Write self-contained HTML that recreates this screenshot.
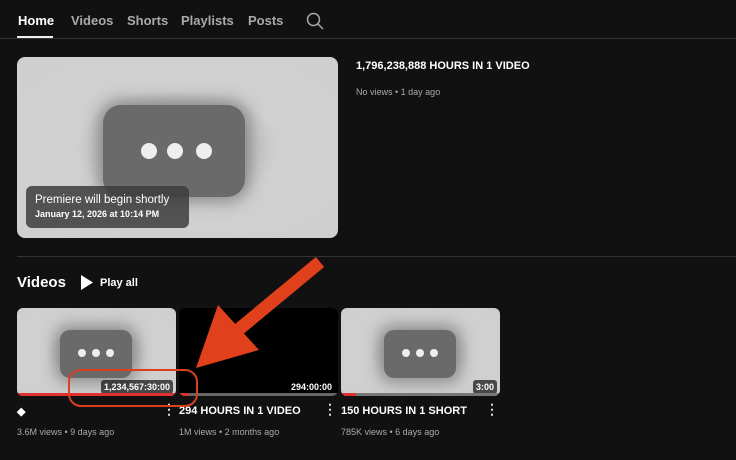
<!DOCTYPE html><html><head><style>
body{margin:0;width:736px;height:460px;background:#111;font-family:"Liberation Sans",sans-serif;color:#fff;position:relative;overflow:hidden}
.a{position:absolute}
.tab{position:absolute;top:13px;font-size:13px;font-weight:bold;color:#aaa}
.th{position:absolute;border-radius:8px;overflow:hidden;background:radial-gradient(ellipse at center,#9a9a9a 0%,#d0d0d0 45%,#cfcfcf 100%)}
.pill{position:absolute;background:#6a6a6a;border-radius:14px;box-shadow:0 0 14px 6px rgba(90,90,90,.5)}
.dot{position:absolute;background:#eee;border-radius:50%}
.dur{position:absolute;background:rgba(0,0,0,.65);color:#fff;font-size:9px;font-weight:bold;padding:2px 3px;border-radius:3px}
.t{position:absolute;font-size:11px;font-weight:bold}
.m{position:absolute;font-size:9px;color:#aaa}
.k{position:absolute;font-size:14px;font-weight:bold;color:#ddd}
</style></head><body>
<div class="tab" style="left:18px;color:#fff">Home</div>
<div class="a" style="left:17px;top:36px;width:36px;height:2px;background:#eee"></div>
<div class="tab" style="left:71px">Videos</div>
<div class="tab" style="left:127px">Shorts</div>
<div class="tab" style="left:181px">Playlists</div>
<div class="tab" style="left:248px">Posts</div>
<svg class="a" style="left:306px;top:12px" width="18" height="18" viewBox="0 0 18 18"><circle cx="7.5" cy="7.5" r="6" fill="none" stroke="#aaa" stroke-width="1.5"/><path d="M12 12l5 5" stroke="#aaa" stroke-width="1.5"/></svg>
<div class="a" style="left:0;top:38px;width:736px;height:1px;background:#333"></div>

<div class="th" style="left:17px;top:57px;width:321px;height:181px">
<div class="pill" style="left:86px;top:48px;width:142px;height:92px;border-radius:18px"></div>
<div class="dot" style="left:124px;top:86px;width:16px;height:16px"></div>
<div class="dot" style="left:150px;top:86px;width:16px;height:16px"></div>
<div class="dot" style="left:179px;top:86px;width:16px;height:16px"></div>
<div class="a" style="left:9px;top:129px;width:163px;height:42px;background:rgba(60,60,60,.85);border-radius:6px"></div>
<div class="a" style="left:18px;top:137px;font-size:11.5px;color:#fff">Premiere will begin shortly</div>
<div class="a" style="left:18px;top:152px;font-size:9px;font-weight:bold;color:#fff">January 12, 2026 at 10:14 PM</div>
</div>
<div class="t" style="left:356px;top:60px">1,796,238,888 HOURS IN 1 VIDEO</div>
<div class="m" style="left:356px;top:87px">No views • 1 day ago</div>
<div class="a" style="left:17px;top:256px;width:719px;height:1px;background:#333"></div>
<div class="a" style="left:17px;top:274px;font-size:15px;font-weight:bold">Videos</div>
<svg class="a" style="left:80px;top:275px" width="14" height="15"><path d="M1 0L13 7.5 1 15z" fill="#fff"/></svg>
<div class="a" style="left:100px;top:277px;font-size:11px;font-weight:bold">Play all</div>

<div class="th" style="left:17px;top:308px;width:159px;height:88px;border-radius:6px">
<div class="pill" style="left:43px;top:22px;width:72px;height:48px;border-radius:10px"></div>
<div class="dot" style="left:61px;top:41px;width:8px;height:8px"></div><div class="dot" style="left:75px;top:41px;width:8px;height:8px"></div><div class="dot" style="left:89px;top:41px;width:8px;height:8px"></div>
<div class="dur" style="right:3px;top:72px">1,234,567:30:00</div>
<div class="a" style="left:0;bottom:0;width:100%;height:3px;background:#e03030"></div>
</div>
<div class="a" style="left:179px;top:308px;width:159px;height:88px;background:#000;border-radius:6px;overflow:hidden">
<div class="dur" style="right:3px;top:72px">294:00:00</div>
<div class="a" style="left:0;bottom:0;width:100%;height:3px;background:#666"></div>
<div class="a" style="left:0;bottom:0;width:10px;height:3px;background:#e03030"></div>
</div>
<div class="th" style="left:341px;top:308px;width:159px;height:88px;border-radius:6px">
<div class="pill" style="left:43px;top:22px;width:72px;height:48px;border-radius:10px"></div>
<div class="dot" style="left:61px;top:41px;width:8px;height:8px"></div><div class="dot" style="left:75px;top:41px;width:8px;height:8px"></div><div class="dot" style="left:89px;top:41px;width:8px;height:8px"></div>
<div class="dur" style="right:3px;top:72px">3:00</div>
<div class="a" style="left:0;bottom:0;width:100%;height:3px;background:#777"></div>
<div class="a" style="left:0;bottom:0;width:15px;height:3px;background:#e03030"></div>
</div>
<div class="t" style="left:17px;top:405px">◆</div>
<div class="k" style="left:162px;top:401px">⋮</div>
<div class="t" style="left:179px;top:405px">294 HOURS IN 1 VIDEO</div>
<div class="k" style="left:323px;top:401px">⋮</div>
<div class="t" style="left:341px;top:405px">150 HOURS IN 1 SHORT</div>
<div class="k" style="left:485px;top:401px">⋮</div>
<div class="m" style="left:17px;top:427px">3.6M views • 9 days ago</div>
<div class="m" style="left:179px;top:427px">1M views • 2 months ago</div>
<div class="m" style="left:341px;top:427px">785K views • 6 days ago</div>

<svg class="a" style="left:0;top:0" width="736" height="460">
<rect x="69" y="370" width="128" height="36" rx="12" fill="none" stroke="#d9401e" stroke-width="2"/>
<path d="M320 262L238 330" stroke="#e0401c" stroke-width="13"/>
<path d="M196 368L218 305L259 350z" fill="#e0401c"/>
</svg>
</body></html>
